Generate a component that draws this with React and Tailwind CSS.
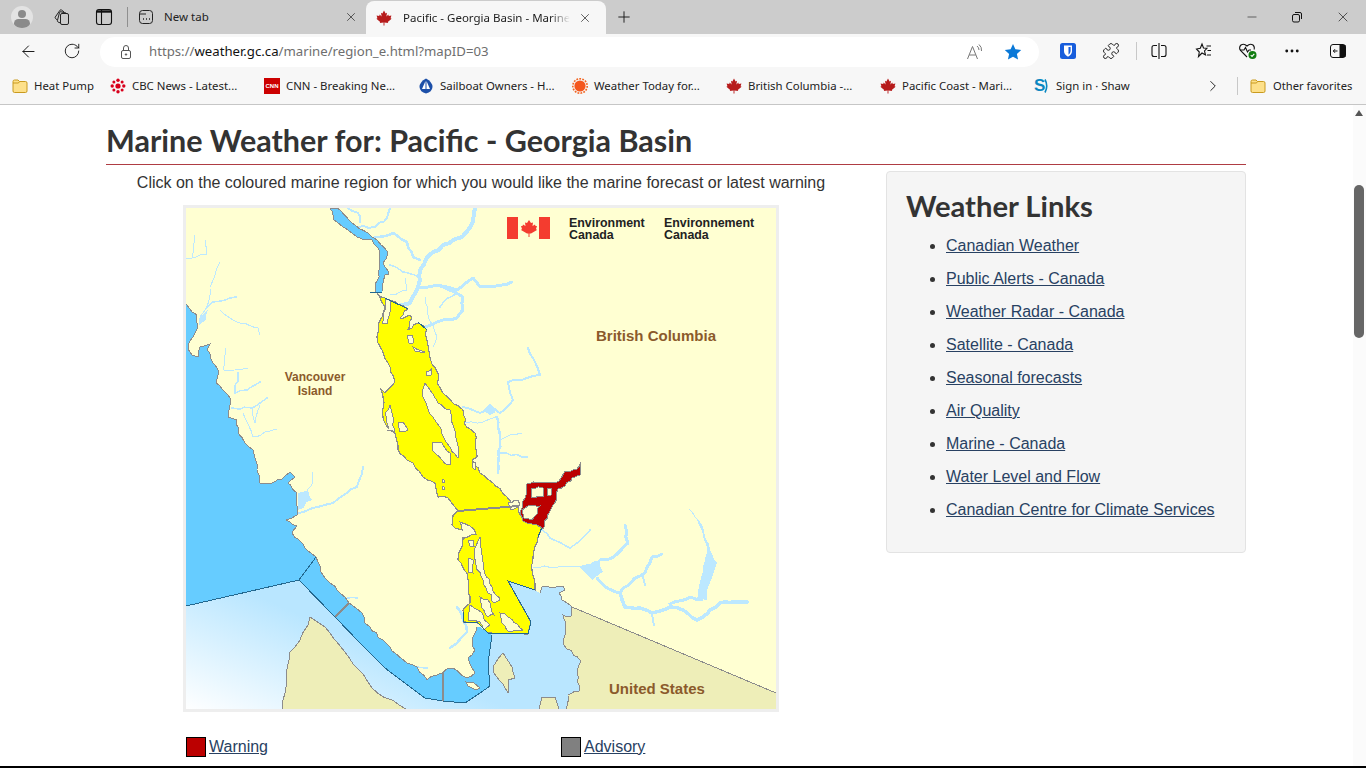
import React from "react";
import { ArrowLeft, RotateCw, X, Plus, Minus, Puzzle, Ellipsis, ChevronRight } from "lucide-react";

const Leaf = ({ size = 16, cls = "" }) => (
  <svg width={size} height={size} viewBox="0 0 16 16" className={cls}>
    <path fill="#b71c1c" d="M8 0.5 L9.6 3.4 L11 2.8 L10.4 6.4 L12.3 4.6 L12.8 6 L15.4 5.6 L14.6 8.2 L15.6 8.8 L11.8 11.9 L12.2 13 L8.4 12.6 L8.5 15.5 L7.5 15.5 L7.6 12.6 L3.8 13 L4.2 11.9 L0.4 8.8 L1.4 8.2 L0.6 5.6 L3.2 6 L3.7 4.6 L5.6 6.4 L5 2.8 L6.4 3.4 Z" />
  </svg>
);

const Folder = () => (
  <svg width="16" height="16" viewBox="0 0 16 16">
    <path d="M1 3.5 Q1 2 2.5 2 H6 L7.5 3.5 H13.5 Q15 3.5 15 5 V13 Q15 14.5 13.5 14.5 H2.5 Q1 14.5 1 13 Z" fill="#fde08a" stroke="#c99a1e" strokeWidth="1" />
    <path d="M1 5 H6.5 L7.5 3.5" fill="none" stroke="#c99a1e" strokeWidth="1" />
  </svg>
);

const Cbc = () => (
  <svg width="16" height="16" viewBox="0 0 16 16">
    <g fill="#d8001c">
      <circle cx="8" cy="8" r="2.6" />
      <circle cx="8" cy="2.2" r="1.7" /><circle cx="8" cy="13.8" r="1.7" />
      <circle cx="2.2" cy="8" r="1.7" /><circle cx="13.8" cy="8" r="1.7" />
      <circle cx="3.9" cy="3.9" r="1.5" /><circle cx="12.1" cy="3.9" r="1.5" />
      <circle cx="3.9" cy="12.1" r="1.5" /><circle cx="12.1" cy="12.1" r="1.5" />
    </g>
  </svg>
);

const Cnn = () => (
  <span className="w-4 h-4 bg-[#cc0000] text-white text-[6px] font-bold flex items-center justify-center leading-none [font-family:'Liberation_Sans',sans-serif]">CNN</span>
);

const Sail = () => (
  <svg width="16" height="16" viewBox="0 0 16 16">
    <path d="M8 0.5 Q14.5 4 14.5 9 Q14 14 8 15.5 Q2 14 1.500 9 Q1.500 4 8 0.5 Z" fill="#1c4fa8" />
    <path d="M7.500 3 V11 H4 Z M8.500 3 L12 11 H8.500 Z" fill="#fff" />
  </svg>
);

const Sun = () => (
  <svg width="16" height="16" viewBox="0 0 16 16">
    <circle cx="8" cy="8" r="7.2" fill="none" stroke="#f26522" strokeWidth="1.6" strokeDasharray="1.8 1.2" />
    <circle cx="8" cy="8" r="5.6" fill="#f4561d" />
  </svg>
);

const Shaw = () => (
  <span className="w-4 flex items-center text-[#0b87c1] text-[17px] font-bold leading-none whitespace-nowrap [font-family:'Liberation_Sans',sans-serif]">
    S
    <svg className="-ml-px" width="5" height="16" viewBox="0 0 5 16" fill="none" stroke="#0b87c1" strokeWidth="1.6">
      <path d="M1 1.500 Q4.500 8 1 14.500" />
    </svg>
  </span>
);

const bookmarks = [
  { w: "w-[98px]", icon: <Folder />, text: "Heat Pump" },
  { w: "w-[154px]", icon: <Cbc />, text: "CBC News - Latest..." },
  { w: "w-[154px]", icon: <Cnn />, text: "CNN - Breaking Ne..." },
  { w: "w-[154px]", icon: <Sail />, text: "Sailboat Owners - H..." },
  { w: "w-[154px]", icon: <Sun />, text: "Weather Today for..." },
  { w: "w-[154px]", icon: <Leaf />, text: "British Columbia -..." },
  { w: "w-[154px]", icon: <Leaf />, text: "Pacific Coast - Mari..." },
  { w: "w-[160px]", icon: <Shaw />, text: "Sign in · Shaw" },
];

const links = [
  "Canadian Weather",
  "Public Alerts - Canada",
  "Weather Radar - Canada",
  "Satellite - Canada",
  "Seasonal forecasts",
  "Air Quality",
  "Marine - Canada",
  "Water Level and Flow",
  "Canadian Centre for Climate Services",
];

const CREAM = "#ffffd2";
const SKY = "#66ccff";
const RIVER = "#bce8ff";
const GREY = "#8c8c8c";
const DARK = "#23688f";
const RED = "#bb0000";

/* Roughens a hand-traced outline so it reads like a coastline; same coordinates always give the same wobble. */
const wobble = (x, y, k) => {
  const v = Math.sin(x * 12.9898 + y * 78.233 + k) * 43758.5453;
  return (v - Math.floor(v) - 0.5) * 2.4;
};
const j = (s, step = 5) => {
  const pts = s.trim().split(/\s+/).map((p) => p.split(",").map(Number));
  const out = [];
  pts.forEach((a, idx) => {
    out.push(`${a[0]},${a[1]}`);
    const b = pts[idx + 1];
    if (!b) return;
    const n = Math.max(1, Math.round(Math.hypot(b[0] - a[0], b[1] - a[1]) / step));
    for (let i = 1; i < n; i++) {
      const x = Math.round((a[0] + ((b[0] - a[0]) * i) / n) * 4) / 4;
      const y = Math.round((a[1] + ((b[1] - a[1]) * i) / n) * 4) / 4;
      out.push(`${(x + wobble(x, y, 1)).toFixed(1)},${(y + wobble(x, y, 2)).toFixed(1)}`);
    }
  });
  return out.join(" ");
};

const rivers = [
  ["348,208 358,213 360,222", 2],
  ["390,208 387,218 375,227 357,227", 2],
  ["475,208 473,222 462,237 443,245 427,257 420,270 418,287 410,303 400,305", 4],
  ["375,237 393,233 407,242 413,257 420,260", 2.5],
  ["390,265 403,272 418,277", 1.5],
  ["420,287 437,285 457,290 473,278 480,287 493,287 512,282", 3],
  ["437,285 463,297 463,310 457,318 443,320 425,327", 3],
  ["440,307 448,298 457,293", 1.5],
  ["425,297 428,315 437,337 433,347", 1],
  ["405,278 407,290 390,295", 1],
  ["186,258 207,255 205,240", 1],
  ["195,235 192,257", 1],
  ["220,262 210,287 207,307 200,317", 1],
  ["207,307 213,302 230,298 236,297", 1.5],
  ["220,310 233,320 258,328 260,335", 1],
  ["225,348 223,370 235,370 248,368", 1],
  ["238,373 235,393 247,390 260,382", 1.5],
  ["232,408 252,408 267,398", 1.5],
  ["252,408 255,423 260,405", 1],
  ["243,413 253,437 277,429", 1],
  ["298,513 317,507 333,503 347,493 357,487 363,467", 2],
  ["312,472 313,482 307,490", 1],
  ["348,598 357,598", 1.5],
  ["417,667 427,668", 1.5],
  ["457,607 462,615 467,632 457,643 450,648", 2.5],
  ["463,407 480,413 490,408 500,413 513,400 508,382 540,375 535,362 528,348", 2],
  ["465,423 483,422 498,416", 1],
  ["497,417 500,440 498,473", 2.5],
  ["500,440 510,435 522,433", 1],
  ["500,453 527,457", 1.5],
  ["542,530 550,538 570,548 590,530", 1.5],
  ["533,567 577,567 600,563", 1],
  ["600,560 612,558 628,543 625,525", 3],
  ["597,578 607,588 620,593 635,578 645,573 652,557 662,554", 3],
  ["643,577 645,585", 2],
  ["620,593 625,607 640,608 652,613 670,607 683,610 697,620 720,603 747,602", 3.5],
  ["652,613 654,625", 2],
  ["670,604 690,597 702,600", 3],
];

const holes = [
  "385,300 391,301 390,312 388,323 382,323 384,312 386,306",
  "407,335 412,335 413,343 409,343",
  "413,347 425,352 423,353 415,351",
  "426,372 432,368 431,375 426,375",
  "425,383 422,395 433,417 450,447 458,458 459,453 450,410 438,403 430,390",
  "432,443 442,443 450,453 450,465 442,460 432,450",
  "390,405 385,413 388,430 394,432 393,417",
  "398,423 403,422 408,430 400,432",
  "472,462 476,463 475,470 472,467",
  "442,479 444,480 444,482 442,482",
  "442,486 444,487 444,489 442,489",
  "480,537 482,555 484,570 492,587 500,600 494,603 484,585 476,565 475,548",
  "480,597 488,600 494,615 488,617 482,608",
  "470,605 478,610 490,625 484,630 480,622 468,620",
  "500,613 508,617 523,630 508,631 502,623",
  "468,540 473,540 474,546 470,546",
  "469,558 473,560 473,573 468,572",
  "508,503 518,500 520,505 511,510",
];

const EAST1 = j("540,593 542,587 563,586 565,590 559,593 562,600 572,607");
const EAST2 = j("572,607 571,616 563,615 566,623 564,645 581,661 577,673 579,691 568,695 566,709");
const WEST = j("186,304 197,315 198,326 193,337 188,345 192,355 198,357 200,347 210,344 207,350 213,363 219,372 216,383 223,390 230,398 229,410 228,417 237,420 238,433 245,443 253,450 257,470 260,483 270,484 282,479 290,472 295,477 288,483 297,493 297,515 286,520 297,526 292,533 305,548 316,557");
const BAND = j("316,557 318,562 323,575 345,597 349,603 362,613 365,623 390,647 395,653 407,663 417,667 427,680 437,675 453,668 467,678 475,673 468,658 475,650 472,640 477,627");
const Y_A = j("377,293 381,297 385,298 408,309 403,315 400,318 402,319 410,315 412,318 407,330 418,323 427,330 425,333 428,345 430,358 438,373 437,383 443,393 463,410 466,420 464,423 475,433 477,457 472,460 480,473 493,483 507,497 512,503 518,507 520,515 532,523 542,527 538,537 533,557 532,570 535,583 535,590");
const Y_C = j("463,610 470,603 467,573 458,560 463,538 476,534 470,526 460,522 462,530 455,528 452,525 453,515 458,511 448,498 438,497 435,483 423,477 413,463 407,460 398,450 395,433 386,425 383,417 383,397 380,388 385,393 395,382 388,363 382,350 377,337 379,322 382,317 385,307 377,293");
const RED_OUT = j("581,462 576,470 565,471 559,481 552,483 543,482 527,484 525,498 520,512 523,521 532,524 543,529 550,511 557,498 558,489 565,486 572,478 580,475", 4);

const GeorgiaMap = () => (
  <svg width="590" height="501" viewBox="186 208 590 501" className="block">
    <defs>
      <linearGradient id="sea" gradientUnits="userSpaceOnUse" x1="190" y1="712" x2="245" y2="590">
        <stop offset="0" stopColor="#ffffff" />
        <stop offset="1" stopColor="#b9e6ff" />
      </linearGradient>
    </defs>
    <rect x="186" y="208" width="590" height="501" fill={CREAM} />

    <g shapeRendering="crispEdges">
      {rivers.map(([p, w], i) => (
        <polyline key={i} points={j(p, 6)} fill="none" stroke={RIVER} strokeWidth={w} strokeLinejoin="round" strokeLinecap="round" />
      ))}
      <polygon points={j("199,318 208,310 206,320 199,326")} fill={RIVER} />
      <polygon points={j("298,493 308,490 312,500 298,510")} fill={RIVER} />
      <polygon points={j("580,567 600,560 603,572 592,580")} fill={RIVER} />
      <polygon points={j("483,410 490,404 497,409 490,415")} fill={RIVER} />
      <polygon points={j("689,509 700,522 710,550 717,563 707,590 707,600 697,600 703,567 707,547 697,520")} fill={RIVER} />

      <polygon fill="url(#sea)" points={`186,606 299,580 335,617 360,643 385,668 425,698 443,701 465,703 480,693 490,686 488,663 492,635 488,634 528,634 531,622 508,581 535,590 ${EAST1} ${EAST2} 186,709`} />

      <polygon fill="#eeeeb8" stroke={GREY} points={j("282,709 290,652 300,640 310,617 325,627 372,688 406,709", 8)} />
      <polygon fill="#eeeeb8" stroke={GREY} points={j("503,653 493,667 497,677 508,693 508,680 515,678 512,667")} />
      <polygon fill="#eeeeb8" stroke={GREY} points="539,709 542,697 555,697 559,709" />
      <polygon fill="#eeeeb8" points={`${EAST2} 776,709 776,693`} />
      <polyline fill="none" stroke={GREY} points={`${EAST1} ${EAST2}`} />
      <polyline fill="none" stroke={GREY} points="572,607 776,693" />

      <polygon fill={SKY} points={`${WEST} 299,580 186,606`} />
      <polygon fill={SKY} points={`${BAND} 480,627 492,635 488,663 490,686 480,693 465,703 443,701 425,698 385,668 360,643 335,617 299,580`} />
      <polyline fill="none" stroke={GREY} points={`${WEST} ${BAND}`} />
      <polyline fill="none" stroke={DARK} points="316,557 299,580 186,606" />
      <polyline fill="none" stroke={DARK} points="299,580 335,617 360,643 385,668 425,698 443,701 465,703 480,693 490,686 488,663 492,635" />
      <polyline fill="none" stroke={GREY} strokeWidth="2" points="349,603 335,617" />
      <polyline fill="none" stroke={GREY} strokeWidth="1.2" points="443,672 443,701" />
      <polygon fill={CREAM} stroke={GREY} points="466,682 474,683 480,688 476,690 468,686" />

      <polygon fill={SKY} stroke={GREY} points={j("330,208 334,220 343,227 357,237 372,240 380,253 380,267 375,292 382,292 385,275 389,274 383,263 388,252 377,240 355,225 337,208")} />
      <line x1="370" y1="292" x2="382" y2="292" stroke={DARK} />

      <polygon fill="#ffff00" stroke={GREY} strokeWidth="1.2" points={`${Y_A} 508,581 531,622 528,634 488,633 478,623 464,622 ${Y_C}`} />
      {holes.map((p, i) => (
        <polygon key={i} points={j(p, 4)} fill={CREAM} stroke={GREY} strokeWidth="1" />
      ))}
      <line x1="458" y1="511" x2="518" y2="506" stroke={GREY} strokeWidth="2" />
      <polyline fill="none" stroke={DARK} points="535,590 508,581 531,622 528,634 488,633 478,623 464,622 463,612" />
      <line x1="385" y1="298" x2="408" y2="309" stroke={DARK} />
      <line x1="418" y1="322" x2="427" y2="330" stroke={DARK} />
      <line x1="538" y1="537" x2="542" y2="527" stroke={DARK} />

      <polygon fill={RED} stroke={GREY} strokeWidth="1" points={RED_OUT} />
      <polygon fill={CREAM} stroke={GREY} strokeWidth="1" points={j("532,488 543,488 543,497 531,497", 4)} />
      <polygon fill={CREAM} stroke={GREY} strokeWidth="1" points="547,488 552,488 551,495 547,495" />
      <polygon fill={CREAM} stroke={GREY} strokeWidth="1" points={j("522,510 528,506 540,506 532,520 524,518", 4)} />
    </g>

    <rect x="507" y="217" width="11" height="22" fill="#f43c2f" />
    <rect x="539" y="217" width="11" height="22" fill="#f43c2f" />
    <path fill="#f43c2f" d="M529 220 L531 223 L533 222.5 L532.5 226 L535 224.5 L535.5 226 L537 226 L536 229 L537 230 L531 233.5 L529.5 233.5 L529.5 237 L528.5 237 L528.5 233.5 L527 233.5 L521 230 L522 229 L521 226 L522.5 226 L523 224.5 L525.5 226 L525 222.5 L527 223 Z" />

    <g fontFamily="'Liberation Sans', sans-serif" fontWeight="700">
      <g fontSize="12.4" fill="#222">
        <text x="569" y="227">Environment</text>
        <text x="569" y="239">Canada</text>
        <text x="664" y="227">Environnement</text>
        <text x="664" y="239">Canada</text>
      </g>
      <g fill="#8b5a2b">
        <text x="596" y="341" fontSize="15">British Columbia</text>
        <text x="609" y="694" fontSize="15">United States</text>
        <text x="315" y="381" fontSize="12" textAnchor="middle">Vancouver</text>
        <text x="315" y="395" fontSize="12" textAnchor="middle">Island</text>
      </g>
    </g>
  </svg>
);

const TabStrip = () => (
  <div className="h-[34px] bg-[#cccccc] flex items-center relative shrink-0">
    <div className="w-[22px] h-[22px] rounded-full bg-[#e3e3e3] ml-[11px] overflow-hidden flex flex-col items-center">
      <div className="w-2 h-2 rounded-full bg-[#8a8a8a] mt-[4px]" />
      <div className="w-[16px] h-[10px] rounded-full bg-[#8a8a8a] mt-[1px]" />
    </div>
    <svg className="ml-[20px]" width="18" height="18" viewBox="0 0 18 18" fill="none" stroke="#222" strokeWidth="1">
      <rect x="7.5" y="5.500" width="8" height="11" rx="1.500" />
      <path d="M7.500 15 L5 14 Q4.200 13.500 4.400 12.600 L6.500 4.500 Q7 3.500 8 3.800 L13 5" />
      <path d="M4.400 12 L2.500 10.500 Q1.800 9.800 2.300 9 L7 2.200 Q7.700 1.500 8.500 2 L11 4" />
    </svg>
    <svg className="ml-[24px]" width="18" height="18" viewBox="0 0 18 18" fill="none" stroke="#111" strokeWidth="1.100">
      <rect x="1.500" y="1.500" width="15" height="15" rx="2.500" />
      <path d="M6.500 2 V16" />
      <path d="M2 3.500 H16" strokeWidth="2.400" />
    </svg>
    <div className="w-px h-[20px] bg-[#8f8f8f] ml-[14px]" />
    <div className="w-[238px] flex items-center pl-[10px] pr-[8px]">
      <svg width="16" height="16" viewBox="0 0 16 16" fill="none" stroke="#222" strokeWidth="1">
        <rect x="1.5" y="1.5" width="13" height="13" rx="3" />
        <path d="M1.5 5 H8" />
        <path d="M5 10 h1 M8 10 h1 M11 10 h1" strokeWidth="1.4" />
      </svg>
      <span className="ml-[10px] text-[11.5px] text-[#222]">New tab</span>
      <X className="ml-auto" size={14} strokeWidth={1.2} color="#222" />
    </div>
    <div className="w-[240px] h-[33px] self-end bg-[#f7f7f7] rounded-t-[8px] flex items-center pl-[10px] pr-[14px]">
      <Leaf size={16} />
      <span className="ml-[11px] w-[167px] overflow-hidden whitespace-nowrap text-[11.5px] text-[#222] [mask-image:linear-gradient(to_right,black_88%,transparent)]">Pacific - Georgia Basin - Marine Weather</span>
      <X className="ml-auto" size={14} strokeWidth={1.2} color="#222" />
    </div>
    <Plus className="ml-[9px]" size={18} strokeWidth={1.2} color="#111" />
    <div className="ml-auto flex items-center gap-[31px] pr-[15px]">
      <Minus size={14} strokeWidth={1} color="#111" />
      <svg width="14" height="14" viewBox="0 0 14 14" fill="none" stroke="#111" strokeWidth="1">
        <rect x="2.5" y="4.5" width="7" height="7.5" rx="1.5" />
        <path d="M5 2.5 H10 Q11.5 2.5 11.5 4 V9" />
      </svg>
      <X size={16} strokeWidth={1} color="#111" />
    </div>
  </div>
);

const Toolbar = () => (
  <div className="h-[34px] bg-[#f7f7f7] flex items-center shrink-0">
    <ArrowLeft className="ml-[19px]" size={19} strokeWidth={1.2} color="#111" />
    <RotateCw className="ml-[25px]" size={18} strokeWidth={1.2} color="#111" />
    <div className="ml-[19px] w-[939px] h-[30px] mt-[2px] rounded-full bg-white flex items-center pl-[19px] pr-[17px]">
      <svg width="14" height="16" viewBox="0 0 14 16" fill="none" stroke="#555" strokeWidth="1">
        <rect x="2.5" y="6.5" width="9" height="8" rx="1.5" />
        <path d="M4.5 6.5 V4 Q4.5 1.5 7 1.5 Q9.500 1.5 9.500 4 V6.500" />
        <circle cx="7" cy="10.500" r="0.7" fill="#555" />
      </svg>
      <span className="ml-[16px] text-[13.2px] text-[#6e6e6e] whitespace-nowrap">https://<span className="text-[#111]">weather.gc.ca</span>/marine/region_e.html?mapID=03</span>
      <svg className="ml-auto" width="18" height="18" viewBox="0 0 18 18" fill="none" stroke="#777" strokeWidth="1">
        <path d="M1.500 16 L6.500 3.500 L11.500 16 M3.300 12 H9.700" />
        <path d="M11 3 Q13 4.500 13 7 M13 1.500 Q16 4 15.500 8" />
      </svg>
      <svg className="ml-[20px]" width="18" height="18" viewBox="0 0 18 18">
        <path fill="#0a78d7" d="M9 1 L11.400 6.300 L17.200 7 L12.900 10.900 L14.100 16.600 L9 13.700 L3.900 16.600 L5.100 10.900 L0.800 7 L6.600 6.300 Z" />
      </svg>
    </div>
    <svg className="ml-[20px]" width="18" height="18" viewBox="0 0 18 18">
      <rect x="1" y="1" width="16" height="16" rx="2.5" fill="#175ddc" />
      <path d="M5 3.500 H13 V9 Q13 12.500 9 14.800 Q5 12.500 5 9 Z" fill="#fff" />
      <path d="M9.500 5 H11.600 V9 Q11.600 11.200 9.500 12.800 Z" fill="#175ddc" />
    </svg>
    <Puzzle className="ml-[25px]" size={18} strokeWidth={1.2} color="#111" />
    <div className="w-px h-[18px] bg-[#c8c8c8] ml-[16px]" />
    <svg className="ml-[13px]" width="18" height="18" viewBox="0 0 18 18" fill="none" stroke="#111" strokeWidth="1.100">
      <path d="M7 3.500 H4 Q2 3.500 2 5.500 V12.500 Q2 14.500 4 14.500 H7" />
      <path d="M9 1 V17" />
      <path d="M11 3.500 H14 Q16 3.500 16 5.500 V12.500 Q16 14.500 14 14.500 H11" />
    </svg>
    <svg className="ml-[27px]" width="18" height="18" viewBox="0 0 18 18" fill="none" stroke="#111" strokeWidth="1.1">
      <path d="M7 2 L8.500 6 L12 6.300 L9.500 9 L10.500 13 L7 11 L3.500 14.500 L4.300 10 L1.500 7 L5.300 6.300 Z" />
      <path d="M11.500 4 H16 M12.500 8.500 H16 M12 13 H16" />
    </svg>
    <svg className="ml-[25px]" width="20" height="20" viewBox="0 0 20 20" fill="none" stroke="#111" strokeWidth="1.1">
      <path d="M9 16 L2.500 9.500 Q0.500 6.500 3 4 Q6 2 9 5 Q12 2 15 4 Q17 6 16 8.500" />
      <path d="M2 9 H6 L7.500 6.500 L9.500 11 L11 9 H13" />
      <circle cx="14.500" cy="14" r="4" fill="#107c10" stroke="none" />
      <path d="M12.700 14 L14 15.400 L16.300 12.800" stroke="#fff" />
    </svg>
    <Ellipsis className="ml-[25px]" size={18} strokeWidth={1.8} color="#111" />
    <svg className="ml-[29px]" width="16" height="16" viewBox="0 0 16 16">
      <rect x="0.500" y="1.500" width="15" height="13" rx="2.500" fill="none" stroke="#111" />
      <rect x="9.500" y="2" width="6" height="12" fill="#111" />
      <path d="M7.500 8 H3.500 M5 6.200 L3.300 8 L5 9.800" fill="none" stroke="#111" />
    </svg>
  </div>
);

const Bookmarks = () => (
  <div className="h-[37px] bg-[#f7f7f7] border-b border-[#c6c6c6] flex items-center pl-[12px] shrink-0 text-[11.4px] text-[#222]">
    {bookmarks.map((b) => (
      <div key={b.text} className={`${b.w} flex items-center gap-[6px] whitespace-nowrap shrink-0`}>
        {b.icon}
        <span>{b.text}</span>
      </div>
    ))}
    <ChevronRight className="ml-[10px]" size={18} strokeWidth={1.2} color="#111" />
    <div className="w-px h-[18px] bg-[#c8c8c8] ml-[15px]" />
    <div className="ml-[12px] flex items-center gap-[7px] whitespace-nowrap">
      <Folder />
      <span className="text-[11.2px]">Other favorites</span>
    </div>
  </div>
);

const Scrollbar = () => (
  <div className="w-[13px] bg-[#fbfbfb] shrink-0 flex flex-col items-center pr-px">
    <div className="mt-[5px] w-0 h-0 border-x-[4px] border-x-transparent border-b-[6px] border-b-[#555]" />
    <div className="mt-[69px] w-[10px] h-[153px] rounded-full bg-[#666666]" />
  </div>
);

const lato = "[font-family:Lato,sans-serif]";

export default function App() {
  return (
    <div className="w-[1366px] h-[768px] overflow-hidden flex flex-col bg-white [font-family:'Noto_Sans',sans-serif]">
      <TabStrip />
      <Toolbar />
      <Bookmarks />
      <div className="flex-1 flex min-h-0">
        <main className="flex-1 min-w-0 overflow-hidden pl-[106px] pr-[107px] [font-family:'Liberation_Sans',sans-serif] text-[16px] text-[#333]">
          <h1 className={`${lato} font-bold text-[30.5px] leading-[33px] text-[#333] mt-[19px] pb-[7px] border-b border-[#af3c43]`}>
            Marine Weather for: Pacific - Georgia Basin
          </h1>
          <div className="flex mt-[6px]">
            <div className="w-[780px] shrink-0">
              <p className="text-center w-[750px] leading-[24px]">Click on the coloured marine region for which you would like the marine forecast or latest warning</p>
              <div className="ml-[77px] mt-[10px] w-[596px] border-[3px] border-[#eeeeee]">
                <GeorgiaMap />
              </div>
              <div className="flex items-center mt-[23px] ml-[80px]">
                <div className="w-[375px] flex items-center gap-[3px]">
                  <span className="w-5 h-5 bg-[#bb0000] border border-black" />
                  <a className="text-[#284162] underline">Warning</a>
                </div>
                <div className="flex items-center gap-[3px]">
                  <span className="w-5 h-5 bg-[#808080] border border-black" />
                  <a className="text-[#284162] underline">Advisory</a>
                </div>
              </div>
            </div>
            <aside className="w-[360px] h-[382px] bg-[#f5f5f5] border border-[#e3e3e3] rounded-[4px] px-[19px] pt-[17px] shrink-0">
              <h2 className={`${lato} font-bold text-[29.2px] leading-[33px] text-[#333]`}>Weather Links</h2>
              <ul className="list-disc pl-[40px] mt-[13px] flex flex-col gap-[10.5px] leading-[22.5px]">
                {links.map((l) => (
                  <li key={l}><a className="text-[#284162] underline">{l}</a></li>
                ))}
              </ul>
            </aside>
          </div>
        </main>
        <Scrollbar />
      </div>
      <div className="h-[2px] bg-black shrink-0" />
    </div>
  );
}
